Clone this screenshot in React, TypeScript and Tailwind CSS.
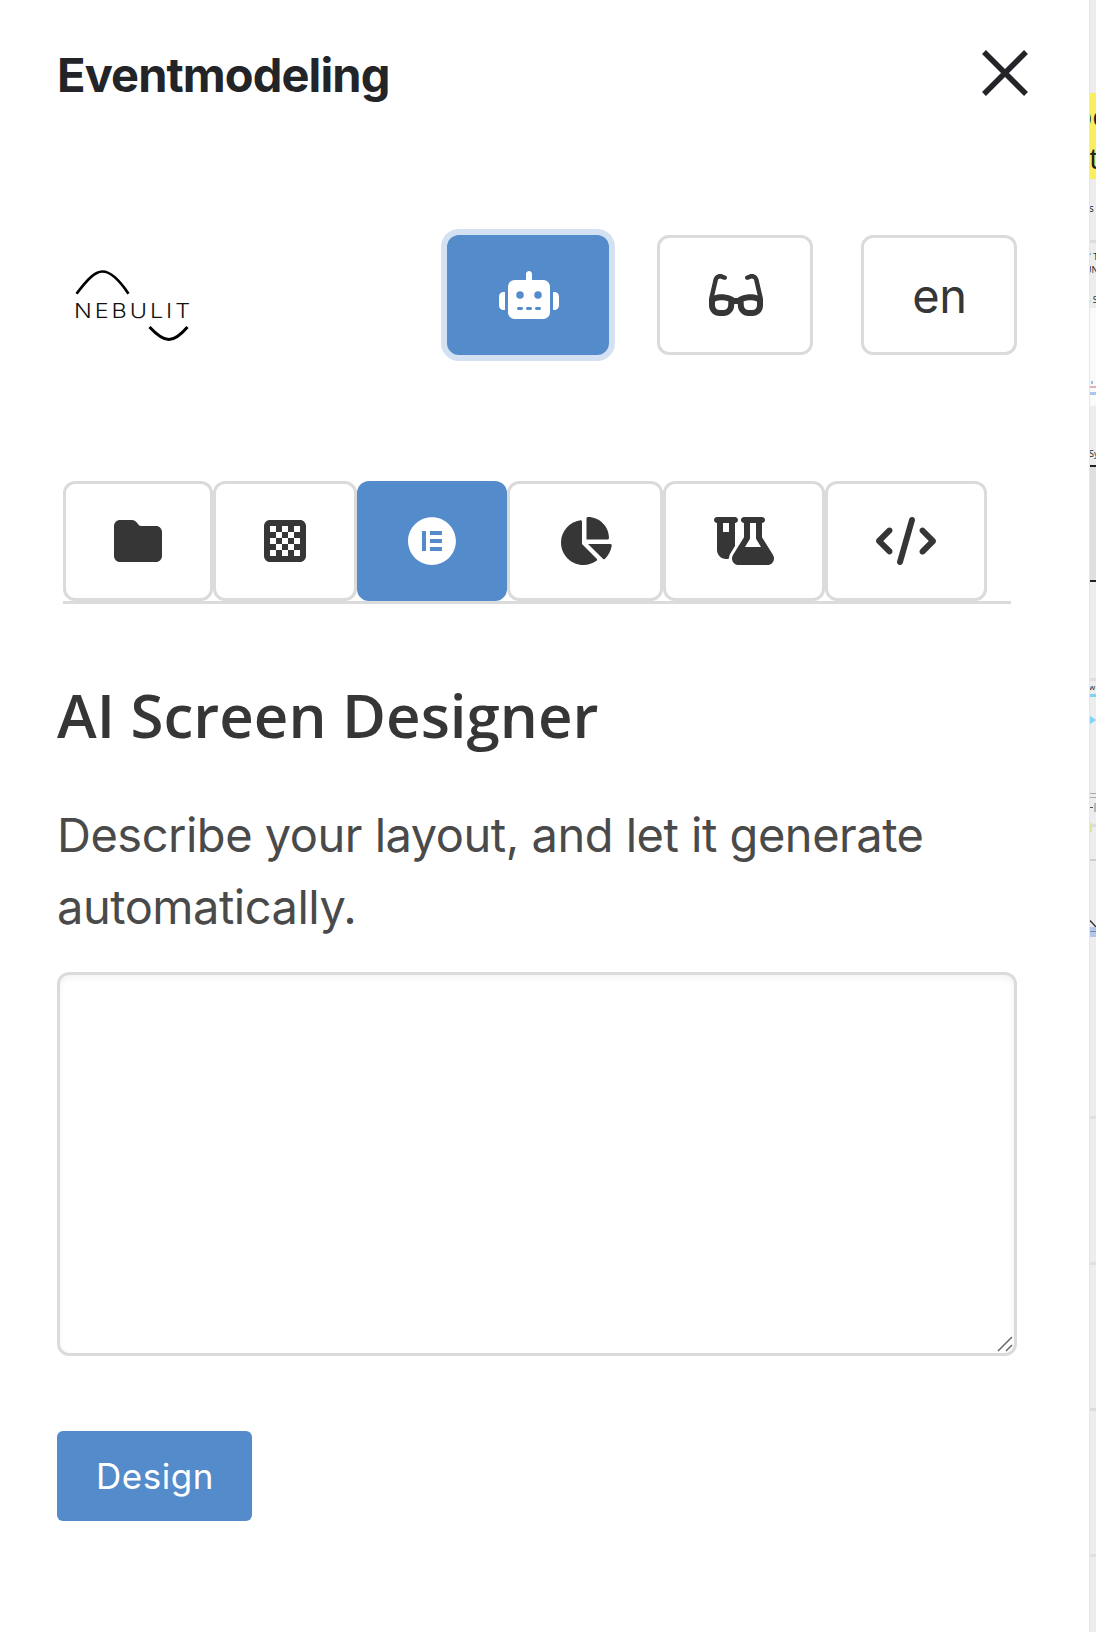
import type { ReactNode } from "react";
import {
  FaChartPie,
  FaChessBoard,
  FaCode,
  FaElementor,
  FaFlaskVial,
  FaFolder,
  FaGlasses,
  FaRobot,
} from "react-icons/fa6";

function Tab({ active, children }: { active?: boolean; children: ReactNode }) {
  return (
    <button
      className={
        "flex h-[120px] items-center rounded-[12px] border-[3px] px-12 " +
        (active
          ? "border-[#548bca] bg-[#548bca] text-white"
          : "border-[#dbdbdb] bg-white text-[#363636]")
      }
    >
      {children}
    </button>
  );
}

function Logo() {
  return (
    <svg className="h-[150px] w-[140px]" viewBox="0 0 140 150" fill="none">
      <path
        d="M19.500 73.700 C30 60 37.500 51.500 45.500 51.500 C54 51.500 63 61 71.500 73.700"
        stroke="black"
        strokeWidth="2.700"
      />
      <path
        d="M92.500 107 C108 123.700 116 123.700 130.500 107"
        stroke="black"
        strokeWidth="3"
      />
      <text
        x="17"
        y="97.500"
        fontFamily="Inter, sans-serif"
        fontSize="20"
        fontWeight="300"
        letterSpacing="2.500"
        textLength="119"
        lengthAdjust="spacingAndGlyphs"
        fill="#111"
      >
        NEBULIT
      </text>
    </svg>
  );
}

/* Sliver of the board that stays visible beside the panel. */
function Board() {
  return (
    <aside className="flex h-[1632px] w-[7px] flex-col overflow-hidden whitespace-nowrap border-l border-[#e6e6e6] bg-[#ededed] font-['Open_Sans',sans-serif] text-[9px] leading-[14px] text-[#222]">
      <div className="mt-[93px] flex h-[86px] flex-col gap-[2px] bg-[#f8ee62] pt-[3px] text-[30px] leading-[40px]">
        <span className="-ml-4">be</span>
        <span className="-ml-px">t</span>
      </div>
      <span className="-ml-px mt-[22px] text-[10px]">s</span>
      <hr className="mt-[25px] border-t-[3px] border-[#dcdcdc]" />
      <span className="-ml-px mt-[7px] leading-[13px]">' T</span>
      <span className="-ml-[5px]">UN</span>
      <span className="-ml-[5px] mt-4">n S</span>
      <div className="mt-px flex h-[98px] flex-col bg-[#fafafa] pt-[73px]">
        <div className="ml-px h-[3px] w-[2px] bg-[#9dbbe0]" />
        <hr className="mt-[2px] border-t-2 border-[#ddb4b4]" />
        <hr className="mt-1 border-t-[3px] border-[#abc7e8]" />
      </div>
      <span className="-ml-px mt-[41px]">Sy</span>
      <div className="mt-1 h-[117px] border-y-2 border-[#222] bg-[#dfdfdf]" />
      <hr className="mt-24 border-t-[3px] border-[#dedede]" />
      <span className="-ml-px text-[8px] leading-[11px]">w</span>
      <hr className="mt-[2px] border-t-[3px] border-[#7ed3f7]" />
      <svg className="mt-[19px] h-2 w-[6px]" viewBox="0 0 6 8">
        <path d="M0 0 6 4 0 8Z" fill="#7ed3f7" />
      </svg>
      <div className="mt-[69px] h-[5px] border-y border-[#aaa]" />
      <div className="mt-[5px] flex h-[9px] items-center gap-px">
        <div className="h-px w-[3px] bg-[#555]" />
        <div className="h-full w-[2px] bg-[#b5b5b5]" />
      </div>
      <div className="mt-[11px] flex h-[9px]">
        <div className="w-[2px] bg-[#d7e8a3]" />
        <div className="mt-px h-[3px] grow bg-[#dcdcdc]" />
      </div>
      <hr className="mt-[27px] border-t-2 border-[#cfcfcf]" />
      <svg className="mt-[58px] h-2 w-[6px]" viewBox="0 0 6 8">
        <path d="M0 1.500 6 8" stroke="#333" strokeWidth="1.500" />
      </svg>
      <div className="h-[10px] bg-[#b3c6e8] pt-1">
        <hr className="border-[#7389b8]" />
      </div>
      <div className="mt-[179px] flex flex-col gap-[143px]">
        <hr className="border-t-[3px] border-[#e0e0e0]" />
        <hr className="border-t-[3px] border-[#e0e0e0]" />
        <hr className="border-t-[3px] border-[#dcdcdc]" />
        <hr className="border-t-[3px] border-[#e0e0e0]" />
      </div>
    </aside>
  );
}

export default function App() {
  return (
    <div className="flex h-[1632px] w-[1096px] overflow-hidden bg-white font-['Inter',sans-serif]">
      <main className="flex w-[1089px] shrink-0 flex-col pl-[57px]">
        <header className="flex h-[150px] items-center justify-between pr-[61px]">
          <h1 className="text-[47px] font-bold leading-[60px] tracking-[-0.900px] text-[#222428]">
            Eventmodeling
          </h1>
          <svg className="mb-[4px] h-[46px] w-[46px]" viewBox="0 0 46 46">
            <path d="M2 2 44 44M44 2 2 44" stroke="#222428" strokeWidth="5.500" />
          </svg>
        </header>

        <section className="mt-[85px] flex h-[120px] w-[960px] items-center">
          <Logo />
          <div className="ml-auto flex gap-12">
            <button className="flex h-[120px] w-[162px] items-center justify-center rounded-[12px] bg-[#548bca] pl-px text-white ring-6 ring-[#d4e1f2]">
              <FaRobot className="h-12 w-[60px]" />
            </button>
            <button className="flex h-[120px] w-[156px] items-center justify-center rounded-[12px] border-[3px] border-[#dbdbdb] pl-px text-[#363636]">
              <FaGlasses className="h-12 w-[54px]" />
            </button>
            <button className="flex h-[120px] w-[156px] items-center justify-center rounded-[12px] border-[3px] border-[#dbdbdb] pl-px pt-[3px] text-[47px] tracking-[-0.300px] text-[#363636]">
              en
            </button>
          </div>
        </section>

        <nav className="ml-[6px] mt-[126px] flex w-[948px] border-b-[3px] border-[#dbdbdb]">
          <Tab>
            <FaFolder className="h-12 w-12" />
          </Tab>
          <Tab>
            <FaChessBoard className="h-12 w-[42px]" />
          </Tab>
          <Tab active>
            <FaElementor className="h-12 w-12" />
          </Tab>
          <Tab>
            <FaChartPie className="h-12 w-[54px]" />
          </Tab>
          <Tab>
            <FaFlaskVial className="h-12 w-[60px]" />
          </Tab>
          <Tab>
            <FaCode className="h-12 w-[60px]" />
          </Tab>
        </nav>

        <h2 className="mt-[77px] font-['Open_Sans',sans-serif] text-[60px] font-semibold leading-[68px] text-[#363636]">
          AI Screen Designer
        </h2>
        <p className="mt-[50px] w-[960px] text-[47px] leading-[72px] tracking-[-0.490px] text-[#4a4a4a]">
          Describe your layout, and let it generate
          <br />
          automatically.
        </p>

        <div className="mt-[29px] flex h-[384px] w-[960px] shrink-0 items-end justify-end rounded-[12px] border-[3px] border-[#dbdbdb] shadow-[inset_0_3px_6px_rgba(10,10,10,0.05)]">
          <svg className="h-[18px] w-[18px]" viewBox="0 0 18 18">
            <path d="M2 16 16 2M10 16 16 10" stroke="#666" strokeWidth="1.500" />
          </svg>
        </div>

        <button className="mt-[75px] h-[90px] w-[195px] shrink-0 rounded-[6px] bg-[#548bca] pl-px text-[35px] tracking-[0.500px] text-white">
          Design
        </button>
      </main>
      <Board />
    </div>
  );
}
